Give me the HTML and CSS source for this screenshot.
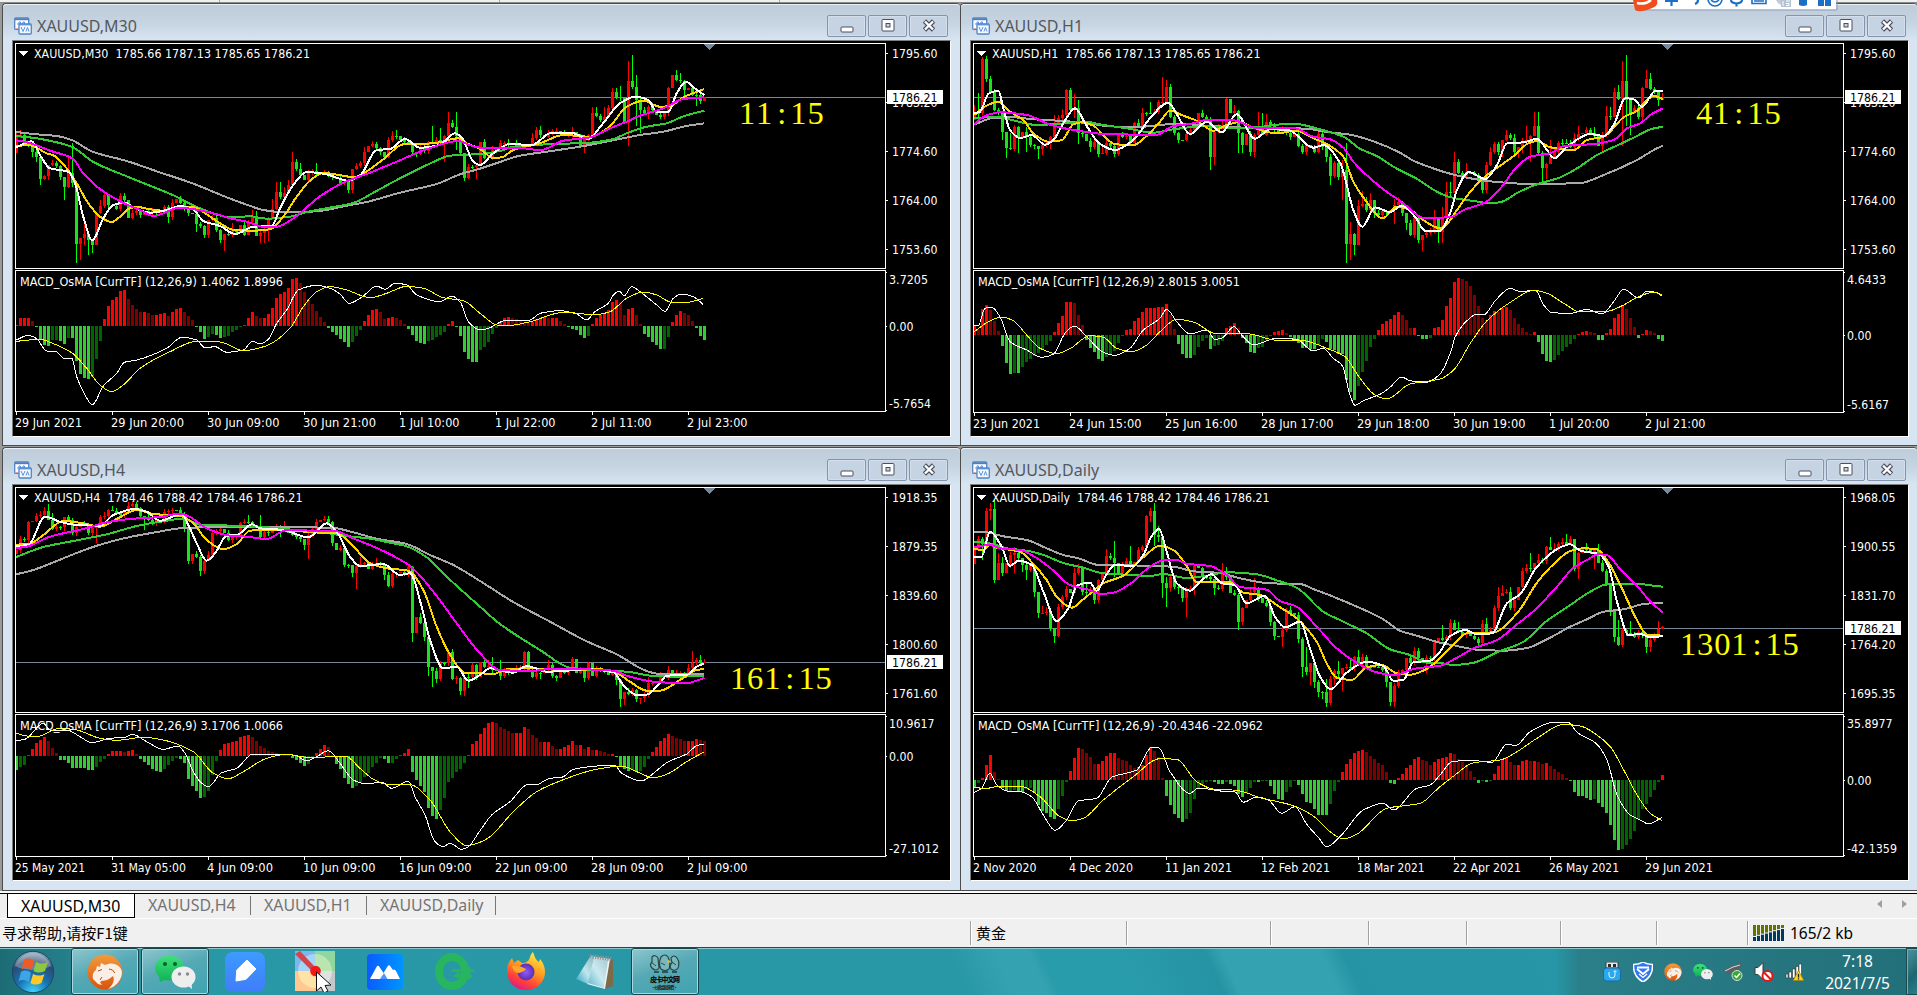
FILE: index.html
```html
<!DOCTYPE html>
<html lang="zh-CN">
<head>
<meta charset="utf-8">
<title>XAUUSD</title>
<link rel="stylesheet" href="styles.css">
</head>
<body>
<svg width="0" height="0" class="defs">
  <defs>
    <linearGradient id="gOrange" x1="0" y1="0" x2="0" y2="1"><stop offset="0" stop-color="#f49a3c"/><stop offset="1" stop-color="#d9540c"/></linearGradient>
    <linearGradient id="gGreen" x1="0" y1="0" x2="0" y2="1"><stop offset="0" stop-color="#3fe07c"/><stop offset="1" stop-color="#12b455"/></linearGradient>
    <linearGradient id="gBlue" x1="0" y1="0" x2="0" y2="1"><stop offset="0" stop-color="#3d9bff"/><stop offset="1" stop-color="#3f7dfa"/></linearGradient>
    <linearGradient id="gMeet" x1="0" y1="0" x2="1" y2="0"><stop offset="0" stop-color="#0a5cff"/><stop offset="1" stop-color="#0095ff"/></linearGradient>
    <linearGradient id="gFox" x1=".8" y1="0" x2=".3" y2="1"><stop offset="0" stop-color="#fff14a"/><stop offset=".45" stop-color="#ff9a1f"/><stop offset=".75" stop-color="#ff4338"/><stop offset="1" stop-color="#e31587"/></linearGradient>
    <radialGradient id="gFoxCore"><stop offset="0" stop-color="#9059ff"/><stop offset="1" stop-color="#5b2fb0"/></radialGradient>
    <radialGradient id="gOrb" cx=".5" cy="1" r="1"><stop offset="0" stop-color="#3fd8ff"/><stop offset=".4" stop-color="#1673b4"/><stop offset=".75" stop-color="#2c4a6e"/><stop offset="1" stop-color="#9db4c6"/></radialGradient>
    <linearGradient id="gNote" x1="0" y1="1" x2="1" y2="0"><stop offset="0" stop-color="#2b9fbc"/><stop offset=".5" stop-color="#bfe6ee"/><stop offset="1" stop-color="#8fb9c2"/></linearGradient>
    <symbol id="chartIcon" viewBox="0 0 18 18">
      <rect x=".7" y=".9" width="14" height="11.500" rx="1" fill="#fff" stroke="#4f86c4" stroke-width="1.300"/>
      <path d="M1 2.200h13.500" stroke="#4a7fc0" stroke-width="2"/><path d="M3 7h2V5h1.500v2H9V5h1.500v2" stroke="#5f8fd8" fill="none"/>
      <path d="M1 11.500h3" stroke="#f0a0a8"/>
      <rect x="5" y="7" width="12.300" height="10" rx="1" fill="#f4f8ff" stroke="#4f86c4" stroke-width="1.300"/>
      <path d="M5 7.600h12" stroke="#5b93d8" stroke-width="1.600"/><path d="M7 10l2 4.500 2-4.500M12 14.500l1.500-4 1.500 4" stroke="#5f8fd8" fill="none"/>
    </symbol>
    <symbol id="leopard" viewBox="0 0 36 36">
      <circle cx="18" cy="18" r="17.500" fill="url(#gOrange)"/>
      <path d="M6 25c-1-4 0-7 3-9l1-4 3 1 1-4 4 2c8-4 16 0 17 7 0 8-6 15-14 17 5-4 7-9 5-13-2 1-3 3-6 4-3 1-5 0-7 2l2 3-4-1-2-2z" fill="#fbeee4"/>
      <path d="M11 17l4-1.500M13 26l2-3M22 15q4 0 6 4" stroke="#a5501b" fill="none"/>
    </symbol>
    <symbol id="wechat" viewBox="0 0 41 34">
      <path d="M4 22l1 5 6-2.500z" fill="#14b857"/><ellipse cx="14.500" cy="13" rx="14.300" ry="12.500" fill="url(#gGreen)"/>
      <circle cx="10" cy="9" r="2" fill="#08642c"/><circle cx="20" cy="9" r="2" fill="#08642c"/>
      <ellipse cx="28.500" cy="22" rx="12" ry="10.500" fill="#eeeeef"/><path d="M32 30l5 4-.5-6z" fill="#eeeeef"/>
      <circle cx="24.500" cy="19" r="1.700" fill="#8b8b8d"/><circle cx="32.500" cy="19" r="1.700" fill="#8b8b8d"/>
    </symbol>
  </defs>
</svg>

<header class="strip"><i></i><i></i><i></i></header>

<main class="desk" id="desk"></main>

<nav class="tabs">
  <span class="tab active">XAUUSD,M30</span>
  <span class="tab">XAUUSD,H4</span>
  <span class="tab">XAUUSD,H1</span>
  <span class="tab daily">XAUUSD,Daily</span>
  <svg class="arrows" width="30" height="10" viewBox="0 0 30 10"><path d="M5 1v8L0 5zM25 1v8l5-4z" fill="#a0a0a0"/></svg>
</nav>

<div class="status">
  <span class="help">寻求帮助,请按F1键</span>
  <span class="cell w156">黄金</span>
  <span class="cell w144"></span>
  <span class="cell w98"></span>
  <span class="cell w98"></span>
  <span class="cell w94"></span>
  <span class="cell w96"></span>
  <span class="cell w91"></span>
  <span class="cell net"><svg width="32" height="16" viewBox="0 0 32 16" id="net"></svg>165/2 kb</span>
</div>

<footer class="taskbar">
  <div class="slot orb"><svg width="44" height="44" viewBox="0 0 44 44">
    <circle cx="22" cy="22" r="20.700" fill="url(#gOrb)" stroke="#174a68"/>
    <path d="M4 16a19 19 0 0 1 36 0c-10 5-26 5-36 0z" fill="#fff" opacity=".28"/>
    <path d="M13 10c3-2 7-2 10 1l-2.500 9.500c-3-3-7-3-10-1z" fill="#ee5b26"/><path d="M25 12c4 2 8 2 12 0l-3 9c-4 2-8 2-11.500 0z" fill="#8dc63f"/>
    <path d="M10 22c3-2 7-2 10 1l-2.500 9.500c-3-3-7-3-10-1z" fill="#3fa4e6"/><path d="M22 24c4 2 8 2 11.500 0l-3 9c-4 2-8 2-11 0z" fill="#fcc92b"/>
  </svg></div>
  <div class="slot task"><svg width="36" height="36"><use href="#leopard"/></svg></div>
  <div class="slot task"><svg width="41" height="34"><use href="#wechat"/></svg></div>
  <div class="slot"><svg width="40" height="40" viewBox="0 0 40 40"><rect width="40" height="40" rx="8" fill="url(#gBlue)"/><path d="M11 29l.8-11L22 8l9 9-10 10.300z" fill="#fff" stroke="#fff" stroke-linejoin="round"/></svg></div>
  <div class="slot"><svg width="40" height="41" viewBox="0 0 40 41"><path d="M0 0h20v20H0z" fill="#7db6e8"/><path d="M20 0h20v20H20z" fill="#8fd6a0"/><path d="M0 20h20v20H0z" fill="#ffc890"/><path d="M20 20h20v20H20z" fill="#c3c9cb"/>
    <path d="M20 20V3A17 17 0 0 0 3 20z" fill="#a5d4f4"/><path d="M20 20V3a17 17 0 0 1 17 17z" fill="#b8e5b0"/><path d="M20 20H3a17 17 0 0 0 17 17z" fill="#ffe2a8"/><path d="M20 20h17a17 17 0 0 1-17 17z" fill="#dfe3e0"/>
    <path d="M0 3l5-3 15 16-3 4z" fill="#d04550"/><circle cx="20.500" cy="20" r="5.300" fill="#f51818"/>
    <path d="M21.500 21v19l4.500-4 3 6 4-2-3-5.500 6-.5z" fill="#fff" stroke="#111" stroke-width="1"/></svg></div>
  <div class="slot"><svg width="36" height="36" viewBox="0 0 36 36"><rect width="36" height="36" rx="4" fill="url(#gMeet)"/><path d="M3 25L9.500 13q1.500-2.500 3 0l4 6 4-6.500q1.500-2.500 3 0l2.500 3.500q1.500-1.500 3 1L33 25z" fill="#fff"/><path d="M13 25l4-6 3.500 6z" fill="#4b97ff"/></svg></div>
  <div class="slot"><svg width="40" height="37" viewBox="0 0 40 37"><ellipse cx="17" cy="18.500" rx="13" ry="14.500" fill="none" stroke="#28b55f" stroke-width="8"/><path d="M17 17.500h22M19 23h18M23 16v9M28 16v9M34 14v12" stroke="#28b55f" stroke-width="2.600"/></svg></div>
  <div class="slot"><svg width="39" height="39" viewBox="0 0 39 39"><path d="M1 19c0-6 2-9 5-13l2 5 4-3 4 3c4 0 7-2 8-6 1-3 2-4 3-5 2 6 3 8 6 10l1-3c4 5 5 9 5 13 0 10-8 18-19 18S1 30 1 19z" fill="url(#gFox)"/><circle cx="20" cy="20" r="8.500" fill="url(#gFoxCore)"/><path d="M6 14c5-1 9 0 14 3-2 3-5 3-7 4-4 0-6-3-7-7z" fill="#ffa52a"/></svg></div>
  <div class="slot"><svg width="38" height="36" viewBox="0 0 38 36"><path d="M33 5l4 1v26l-8 3z" fill="#7c6a48"/><path d="M14 2l20 3-5 30-18-5z" fill="#eef5f5"/><path d="M14 3L0 25l12 5 6-26z" fill="url(#gNote)"/><path d="M18 4l14 2-4 28-16-5z" fill="url(#gNote)" opacity=".75"/><path d="M14 2l21 3" stroke="#8b9294" stroke-width="4" stroke-dasharray="1.500 1"/></svg></div>
  <div class="slot task mt"><svg width="32" height="38" viewBox="0 0 32 38">
    <path d="M3 15q-3-3 0-6V4q3-3 6 1l1 10q-3 4-7 0zM12 16q-3-5 0-12 4-4 7 0 3 6 1 12-4 3-8 0zM22 16q-2-4 1-6l-1-5q3-4 6 0 3 4 1 10-3 4-7 1z" fill="#78b8bb" stroke="#26484b" stroke-width="1.200"/><path d="M2 9l5 4M12 10l4 2M23 9l4 3" stroke="#294a4c" fill="none"/><path d="M18 7l4 1-3 3" fill="#e7b83a"/><path d="M5 19h5M13 19h6M23 19h5" stroke="#20383a" stroke-width="1.500"/>
    <text x="1" y="29" class="mt1" textLength="30">皮卡中文网</text><text x="2" y="36" class="mt2" textLength="27">·炒黄金就来看·</text>
  </svg></div>
  <div class="tray">
    <svg width="20" height="20" viewBox="0 0 20 20"><path d="M4 0h12v6H4z" fill="#e8e8e8" stroke="#30434d"/><path d="M6 2h3v3H6zM11 2h3v3h-3z" fill="#2a2a2a"/><rect x="1.500" y="6" width="17" height="13" rx="3" fill="#2ba7ee" stroke="#1d6b9c"/><path d="M7 10v3q0 3 3 3t3-3V9M11.500 10l1.500-1.500 1.500 1.500" fill="none" stroke="#eaf7ff"/></svg>
    <svg width="20" height="20" viewBox="0 0 20 20"><path d="M10 0c3 2 6 2.500 9.500 2.500C20 10 17 16 10 20 3 16 0 10 .5 2.500 4 2.500 7 2 10 0z" fill="#2f78f0" stroke="#fff" stroke-width="1.500"/><path d="M4 5.500h12M4 7l6 5 6-5" fill="none" stroke="#fff" stroke-width="2"/><path d="M6 12l4 3.500 4-3.500" fill="none" stroke="#fff" stroke-width="1.300"/></svg>
    <svg width="18" height="20" viewBox="0 -2 36 40"><use href="#leopard" width="36" height="36"/></svg>
    <svg width="20" height="18" viewBox="0 0 41 35"><use href="#wechat" width="41" height="34"/></svg>
    <svg width="20" height="18" viewBox="0 0 20 18"><path d="M0 8l8-5 10-2.500L19 3l-5 4-8 4z" fill="#5a5f63"/><path d="M2 8l8-4 7-2" stroke="#d9dddf" fill="none"/><circle cx="14" cy="12.500" r="5" fill="#3aa53a" stroke="#cfe8cf"/><path d="M11.500 12.500l2 2 3.500-4" stroke="#fff" fill="none" stroke-width="1.500"/></svg>
    <svg width="20" height="20" viewBox="0 0 20 20"><path d="M1 5.500h3l5-5v17l-5-5H1z" fill="#fff" stroke="#3a3a3a"/><circle cx="13.500" cy="14" r="5" fill="#fff" stroke="#e01818" stroke-width="2"/><path d="M10 10.500l7 7" stroke="#e01818" stroke-width="2"/></svg>
    <svg width="19" height="18" viewBox="0 0 19 18"><path d="M1 11h2v4H1zM4 9h2.500v6H4zM7.500 6H10v9H7.500zM11 3.500h2.500V15H11zM14 1h2.500v14H14z" fill="#fff" stroke="#333" stroke-width=".6"/><path d="M13.500 7.500l5.300 10H8.200z" fill="#ffd21f" stroke="#a07a00" stroke-width=".7"/><path d="M13.500 11v3.500M13.500 15.300v1.200" stroke="#222" stroke-width="1.300"/></svg>
  </div>
  <div class="clock"><span>7:18</span><span>2021/7/5</span></div>
  <div class="peek"></div>
</footer>

<div class="ime"><svg width="206" height="12" viewBox="0 0 206 12">
  <path d="M2 0h202v9.500H14z" fill="#fff"/><path d="M10 10h195V0" fill="none" stroke="#8f9db8"/>
  <path d="M1 0h24q2 6-6 8.500Q8 13 3 10z" fill="#f04f1d"/><path d="M5 3q8 2 14-3" stroke="#fff" stroke-width="2.500" fill="none"/>
  <g fill="none" stroke="#1c6fc7" stroke-width="2.200"><path d="M33 1h13M39.500 0v6"/><path d="M66 0q0 3-3 4" /><circle cx="83" cy="-1" r="7" stroke-width="1.600"/><path d="M79 0q4 4 8 0" stroke-width="1.600"/><path d="M99 0q0 3 5.500 3.500Q110 3 110 0M104.500 3v3.500"/><path d="M120 0v3.500h14V0M122 1h10" stroke-width="1.600"/></g>
  <path d="M144 0h8v6q-6-1-8-6z" fill="#c2cbd8"/><rect x="149" y="0" width="10" height="7" fill="#b5c2d2"/><path d="M151 1v5M154 1h4M154 3.500h3v2h-3" stroke="#fff" fill="none"/>
  <path d="M167 0h8v5q-4 2-8 0zM186 0h6v6h-6zM193 0h6v6h-6z" fill="#1c6fc7"/>
</svg></div>

<script src="charts.js"></script>
</body>
</html>
```
FILE: styles.css
```css
* { box-sizing: border-box; }
body {
  margin: 0;
  width: 1917px;
  height: 995px;
  overflow: hidden;
  display: flex;
  flex-direction: column;
  background: #f0f0f0;
  font-family: "Noto Sans", "Noto Sans CJK SC", sans-serif;
}
svg { display: block; flex: none; }
.defs { position: absolute; }

.strip {
  flex: none;
  height: 3px;
  background: #f0f0f0;
  border-bottom: 1px solid #8a8a8a;
  display: flex;
  gap: 279px;
  padding-left: 219px;
}
.strip i { width: 1px; background: #aaa; }

.desk {
  flex: none;
  height: 888px;
  display: grid;
  grid-template-columns: 958px 957px;
  grid-template-rows: 443px 444px;
  row-gap: 1px;
  padding-left: 2px;
  background: #9a9a9a;
}
.win {
  border: 1px solid #4c4c4c;
  border-right: 0;
  border-radius: 4px 4px 0 0;
  background: #d7e4f2;
  display: flex;
  flex-direction: column;
  align-items: flex-start;
}
.bar {
  width: 100%;
  height: 36px;
  flex: none;
  display: flex;
  align-items: center;
  padding: 6px 12px 0 11px;
  border-radius: 4px 4px 0 0;
  border-top: 1px solid #e8f0f8;
  background: linear-gradient(#bfccda, #c6d3e0 50%, #d7e4f2);
}
.win:nth-child(even) .bar { padding-right: 11px; }
.bar h2 {
  margin: 0 auto 0 5px;
  font-weight: 400;
  font-size: 16px;
  line-height: 20px;
  color: #54585c;
}
.btns { display: flex; gap: 2px; }
.btn {
  width: 39px;
  height: 22px;
  border: 1px solid #8494ad;
  border-radius: 2px;
  background: #c5d3e3;
  box-shadow: inset 0 0 0 1px #d3dfec;
  display: grid;
  place-items: center;
}
.view {
  margin-left: 9px;
  border: 1px solid #fff;
  border-top-color: #7d7d7d;
  border-left-color: #7d7d7d;
  background: #000;
}
.view text { font-family: "DejaVu Sans Condensed", "Noto Sans", sans-serif; font-size: 12.500px; fill: #fff; white-space: pre; }
.view text.tag { fill: #000; }
.view text.count { font-family: "Liberation Serif", serif; font-size: 32.500px; fill: #ff0; }

.tabs {
  flex: none;
  height: 28px;
  border-top: 2px solid #fafafa;
  border-bottom: 1px solid #fff;
  display: flex;
  align-items: flex-start;
  padding-left: 7px;
  background: linear-gradient(#000 0 1px, #efefef 1px);
}
.tab {
  height: 19px;
  margin-top: 3px;
  padding: 0 13px;
  border-right: 1px solid #777;
  font-size: 15.900px;
  line-height: 19px;
  color: #747474;
  white-space: nowrap;
  width: 116px;
}
.tab.daily { width: 129px; }
.tab.active {
  height: 25px;
  margin: 0;
  width: 128px;
  line-height: 25px;
  color: #000;
  background: #fff;
  border: 1px solid #000;
}
.arrows { margin: 6px 10px 0 auto; }

.status {
  flex: none;
  height: 28px;
  display: flex;
  align-items: center;
  background: #f0f0f0;
  font-size: 15.500px;
  line-height: 24px;
  color: #000;
  white-space: nowrap;
}
.help { width: 970px; padding-left: 2px; font-family: "Noto Sans CJK SC", sans-serif; font-size: 15px; }
.cell { height: 24px; border-left: 1px solid #a0a0a0; box-shadow: inset 1px 0 #fff; padding-left: 5px; font-family: "Noto Sans CJK SC", sans-serif; font-size: 15px; }
.w156 { width: 156px; } .w144 { width: 144px; } .w98 { width: 98px; }
.w94 { width: 94px; } .w96 { width: 96px; } .w91 { width: 91px; }
.net { flex: 1; display: flex; align-items: center; gap: 5px; font-family: "Noto Sans", sans-serif; font-size: 15.500px; }

.taskbar {
  flex: none;
  height: 48px;
  border-top: 1px solid #1e4b50;
  box-shadow: inset 0 1px #8fc8cf;
  display: flex;
  background:
    linear-gradient(90deg, #1d6c75 0, #25808c 70px, transparent 150px, transparent 1555px, #2a7f89 1580px, #226f79 1917px),
    linear-gradient(65deg, #2998a6 0 880px, #35a2b1 920px 950px, #299cab 960px 1030px, #2593a3 1110px, #35a2b1 1125px 1215px, #2594a4 1235px, #2a9aaa 100%);
}
.slot {
  width: 68px;
  margin-right: 2px;
  display: grid;
  place-items: center;
  border: 1px solid transparent;
}
.slot.orb { width: 67px; margin-right: 4px; padding-right: 2px; }
.task {
  border: 1px solid #17444b;
  border-radius: 3px;
  box-shadow: inset 0 0 0 1px #a9d8de;
  background: linear-gradient(160deg, #8fc6cd, #55a9b5 45%, #3fa3b1);
}
.mt1 { font: 900 7px "Noto Sans CJK SC", sans-serif; fill: #111; }
.mt2 { font: 700 4.500px "Noto Sans CJK SC", sans-serif; fill: #222; }
.tray { margin-left: auto; display: flex; align-items: center; gap: 10.800px; padding-top: 1px; }
.clock {
  width: 95px;
  margin-left: 6px;
  display: flex;
  flex-direction: column;
  align-items: center;
  padding-top: 2px;
  color: #fff;
  font-size: 15.500px;
  line-height: 22px;
}
.peek { width: 11px; margin-left: 1px; border: 1px solid #1a4a50; border-right: 0; box-shadow: inset 1px 1px #6fb0b8; background: linear-gradient(135deg, #4c949d, #1d6670 60%, #2a808b); }

.ime { position: absolute; left: 1632px; top: 0; }
```
FILE: charts.js
```js
// Geometry below is stored in thirds of a pixel; moving averages and MACD lines
// are [left half | right half], the right half being shifted by `shift`.
const BAR = 4;

const panels = [
  {
    title: 'XAUUSD,M30', label: 'XAUUSD,M30  1785.66 1787.13 1785.65 1786.21', labelW: 276,
    osc: 'MACD_OsMA [CurrTF] (12,26,9) 1.4062 1.8996', oscW: 263,
    left: 13, top: 41, ox: 0, oy: 0, shift: 1440, x0: 16, right: 885, oscBottom: 411, now: 97, nowTop: 90,
    prices: ['1795.60', '1783.20', '1774.60', '1764.00', '1753.60'],
    scale: [['3.7205', 284, 39], ['0.00', 331, 24.5], ['-5.7654', 408, 42]], zero: 978,
    times: [['29 Jun 2021', 67], ['29 Jun 20:00', 73], ['30 Jun 09:00', 72.5], ['30 Jun 21:00', 73], ['1 Jul 10:00', 60.5], ['1 Jul 22:00', 60.5], ['2 Jul 11:00', 60.5], ['2 Jul 23:00', 60.5]],
    count: ['11:15', 739, 124], open: 458,
    bars: '412/395 405/390 425 432 455//470 470//485 538//555 527//540 495//540 490 497 530 560//600 520/470 550/430/560 732//788 714//780 702/665/735 720//765 735//758 640 617/600 585/575 615 618 628 587/580 600/580 655 640 632 645 632 640 630 638 632 622/615 650//670 610/598 597 610 628 640 643 672//695 678 705 660//715 655 690 720 702//752 705 690/668 695 675 705 665//705 648/630 708/632 698//728 690//728 655//722 628/597 577/547 592/547 580/560 555/540 485/457 507/478 525/490 540 520 512 517/490 520 518 524 530 538 548 545 570 508//578 498/488 488 455/440 437 433 445/425 455 470 420/412 408/392 408/390 420 425 430 455 462//472 440 452 425 430/378 420 425/385 408//485 370/335 380 408/335/450 458 535//542 500 500 495//537 425 475 470 450/437 445 430 428 432/418 430 435 437 438 435 415/400 390/382 405/378 410 398 393 392/385 398 405 402 395/380 412 437 415//458 405 340/322 348/320 360 352/322 325/315 275/265 290/265 295/257 368/290 243/183/437 262/165 300/225/378 330/290/400 340 320//357 330 345 352//357 340 263 225 240/210 243/220 270//290 265 285 285//317 302 290',
    hist: '975 954 954 954 964 980 1017 1035 1038 1020 1019 1023 1032 1014 1014 1083 1122 1134 1137 1130 1077 1023 957 918 900 891 873 870 897 915 927 936 936 939 945 945 942 939 948 936 927 924 936 948 960 980 996 1017 1010 1002 1005 1013 1010 1008 996 990 981 975 954 936 948 954 954 942 924 894 882 876 864 837 834 849 876 897 912 933 951 966 984 996 1005 1017 1026 1041 1025 1008 990 963 945 930 927 936 957 954 951 954 960 972 987 1005 1023 1029 1032 1023 1020 1012 1005 996 972 963 980 1008 1056 1077 1086 1086 1050 1041 1026 1002 984 966 954 951 954 957 960 966 969 966 957 954 951 954 954 954 963 972 981 986 990 1005 1014 1008 972 954 945 942 930 906 900 906 945 927 924 945 972 1002 1011 1026 1035 1047 1046 1011 966 945 933 939 945 963 984 1008 1020',
    ma: [
      ['#a9a9a9', '49,396 110,403 170,408 217,421 277,455 380,483 470,514 580,551 680,592 740,614 790,630 850,637 950,634 1040,617 1100,606 1200,578 1310,552 1380,523 1440,506|0,506 60,486 120,467 200,455 300,440 400,421 480,405 550,395 620,378 673,370'],
      ['#32cd32', '49,408 110,415 170,427 217,441 280,486 380,529 450,557 520,586 600,625 690,652 750,649 800,656 870,650 920,636 1000,621 1060,609 1120,578 1200,535 1300,486 1350,467 1440,462|0,460 60,453 100,440 200,433 330,428 400,417 440,400 500,380 560,370 610,349 673,332'],
      ['#ffd700', '49,437 90,436 140,460 160,466 200,505 230,550 265,610 300,650 335,666 360,650 385,627 410,620 440,626 490,632 530,625 580,622 620,643 660,670 700,689 760,692 810,688 850,650 890,590 930,542 970,519 1030,527 1060,532 1090,520 1150,478 1210,433 1300,430 1375,415 1400,430 1440,447|0,447 40,474 65,472 100,450 180,430 250,405 330,410 385,383 440,320 490,302 540,320 570,318 610,292 673,267'],
      ['#ffffff', '49,442 95,424 120,465 150,505 205,515 225,550 250,650 277,721 310,655 340,615 375,608 400,622 450,638 500,630 540,618 580,628 610,663 660,678 705,702 760,680 815,678 840,625 880,555 920,516 975,522 1045,542 1080,527 1130,450 1170,447 1215,417 1260,443 1320,435 1365,400 1385,412 1420,485 1440,495|0,492 40,460 90,432 155,435 215,398 280,400 325,417 365,375 420,310 465,290 505,300 530,335 565,335 590,280 618,245 640,262 673,285'],
      ['#ff00ff', '49,421 85,428 150,452 217,475 250,520 300,567 360,604 420,630 460,648 540,623 640,640 690,655 740,665 790,680 830,680 880,655 960,589 1030,548 1110,518 1190,485 1280,448 1375,423 1410,436 1440,443|0,443 130,445 180,451 250,422 330,412 390,385 440,365 480,347 550,325 610,297 673,292']
    ],
    lines: [
      ['#ffffff', '49,1020 85,1006 110,1016 140,1053 165,1053 193,1075 215,1074 230,1130 250,1175 277,1214 310,1158 350,1120 373,1087 410,1080 500,1045 545,1012 590,1020 615,1043 645,1040 680,1057 730,1050 757,1024 780,1032 805,1018 830,970 860,930 895,870 950,856 990,865 1020,882 1047,910 1085,892 1130,858 1155,868 1185,850 1220,854 1250,885 1320,905 1355,888 1380,905 1405,965 1440,990|0,978 25,985 75,962 150,960 180,940 240,932 290,942 320,960 345,935 385,910 400,885 418,873 432,888 455,860 480,875 530,915 555,934 580,895 605,882 640,890 670,914'],
      ['#ffff00', '49,1024 120,1018 150,1027 215,1058 260,1105 300,1155 335,1175 370,1155 420,1105 510,1055 590,1024 660,1026 730,1052 800,1037 870,985 910,920 950,875 990,860 1040,870 1110,893 1160,880 1220,859 1270,865 1330,893 1390,902 1440,940|0,938 50,975 75,978 150,965 250,937 345,944 390,935 440,895 490,876 530,885 575,907 620,907 670,895']
    ]
  },
  {
    title: 'XAUUSD,H1', label: 'XAUUSD,H1  1785.66 1787.13 1785.65 1786.21', labelW: 268.5,
    osc: 'MACD_OsMA [CurrTF] (12,26,9) 2.8015 3.0051', oscW: 262,
    left: 971, top: 41, ox: 960, oy: 0, shift: 1431, x0: 974, right: 1843, oscBottom: 412, now: 97, nowTop: 90,
    prices: ['1795.60', '1783.20', '1774.60', '1764.00', '1753.60'],
    scale: [['4.6433', 284, 39], ['0.00', 340, 24.5], ['-5.6167', 409, 42]], zero: 1005,
    times: [['23 Jun 2021', 67], ['24 Jun 15:00', 72.5], ['25 Jun 16:00', 72.5], ['28 Jun 17:00', 72.5], ['29 Jun 18:00', 72.5], ['30 Jun 19:00', 72.5], ['1 Jul 20:00', 60.5], ['2 Jul 21:00', 60.5]],
    count: ['41:15', 1696, 124], open: 360,
    bars: '340/315 340/280/350 178//345 237/168 275/228 330 340 395//420 443//473 448/400 380 410//458 395 410/380/455 435 438 448//478 435//465 430 410//448 370/345 353 345/328 270 330/265 325/282/355 400/300/433 402 422 440//455 425 462 458/440 430//465 438 462 405//467 412 408 430 370/365 382/357 340/325 340 340/305 335 307 305/230 262/240 350 398 420//430 420 403//422 390 380 340 350 360 470/350/510 395//495 380 375/357 297 340 332/315 400/330/460 435//458 402 455//467 405//470 385/335 405/340 365/342 378 390/370 395 388 400 410 403 438 455 435 445 457 402//460 440/395 470//485 527//555 490 530 510/480/600 732/430/788 702/665/780 735//765 618/600 612/573 630/590 600/580 640//655 645 632 635 630 615/597/672 605/592 640 670//690 705 655//715 720 705//752 700//715 690 650/630 697//728 652/620/728 577/547 580/547 485/457 520/478 527 515/490 522 525 540 570 495/487/578 455/440 433 455/425 420//470 405/390 415/400 455/403/465 440//475 422//460 420/378 408//485 378/337 458/337 503//545 493//537 470/420 455 430 430/418 430/418 440 415/400 402/378 398 390 400 408/380 437 405//455 348/318 350/320 275/265 297/255 243/183/437 300/165/378 340//405 325 350//357 263 237/210 268/220 275 300//317 290/280',
    hist: '975 990 927 915 930 963 993 1038 1089 1122 1118 1118 1101 1086 1077 1068 1060 1050 1035 1022 996 969 948 906 906 909 945 975 1020 1044 1056 1077 1083 1070 1063 1052 1028 1007 990 987 963 954 936 924 924 924 921 921 912 945 987 1032 1062 1074 1074 1065 1041 1023 1014 1047 1038 1035 1022 984 978 969 984 1014 1029 1056 1059 1043 1041 1020 1008 996 993 990 999 1011 1017 1029 1044 1044 1047 1047 1035 1017 1026 1047 1050 1062 1062 1140 1176 1200 1158 1116 1083 1041 1017 990 972 963 957 945 936 945 960 984 984 1008 1017 1017 1013 984 981 960 918 894 846 834 837 843 858 885 918 954 960 945 933 936 924 921 930 954 972 984 996 1002 996 1026 1062 1083 1086 1080 1065 1053 1041 1032 1017 1002 996 993 996 999 1020 1020 999 987 954 942 915 927 954 981 1014 1002 990 993 999 1017 1022',
    ma: [
      ['#a9a9a9', '43,374 100,354 160,352 220,358 310,363 370,368 440,378 520,382 600,375 650,371 740,377 860,383 960,384 1040,386 1100,396 1170,404 1240,424 1320,458 1360,482 1440,512|0,508 50,524 100,535 170,545 260,551 350,551 430,549 500,525 600,480 650,450 677,437'],
      ['#32cd32', '43,355 110,350 160,361 230,375 300,371 380,366 430,375 500,385 580,398 640,388 730,379 820,384 890,382 950,374 1000,371 1080,388 1150,410 1200,446 1250,468 1300,500 1370,536 1440,580|0,574 50,594 110,603 160,610 195,605 240,579 300,553 370,532 420,505 480,465 550,432 600,408 640,388 677,380'],
      ['#ffd700', '43,345 80,317 115,305 150,335 190,360 220,400 265,425 305,421 340,373 365,367 400,377 430,405 465,433 520,435 560,408 600,365 630,332 670,347 710,362 760,392 800,375 840,366 880,383 950,400 1010,392 1060,415 1100,432 1150,470 1180,545 1210,592 1268,655 1310,620 1350,630 1400,667 1440,685|0,684 30,672 60,630 100,575 150,525 200,490 240,460 270,432 300,423 340,442 410,450 450,420 500,410 560,352 600,332 630,300 650,288 677,297'],
      ['#ffffff', '43,340 60,335 85,282 115,272 130,325 150,390 180,414 215,405 255,434 280,420 310,370 345,325 380,378 420,432 465,450 520,420 570,355 625,308 650,342 690,402 740,365 785,397 830,343 885,416 930,388 985,390 1060,443 1090,435 1140,488 1150,515 1180,630 1207,680 1245,622 1290,636 1325,617 1365,650 1395,692 1440,692|0,692 40,638 60,570 95,516 145,537 180,495 210,430 260,427 300,416 330,450 352,475 390,440 460,402 500,408 530,375 565,295 590,298 615,320 655,273 677,272'],
      ['#ff00ff', '43,374 75,348 120,337 200,345 270,374 340,390 450,403 590,404 640,378 690,372 740,360 820,361 890,384 1000,384 1060,410 1110,418 1150,443 1180,485 1260,560 1330,610 1390,653 1440,653|0,655 45,650 80,630 145,607 190,565 240,500 280,470 340,460 380,438 470,432 530,420 570,385 610,370 640,345 677,325']
    ],
    lines: [
      ['#ffffff', '43,975 55,976 75,925 95,922 120,950 150,1025 200,1050 245,1072 280,1063 315,1000 343,978 380,1010 430,1057 465,1066 510,1045 550,990 600,955 620,928 650,965 690,1002 740,990 765,1018 785,1015 822,980 845,1005 880,1034 950,1015 1010,1018 1060,1053 1090,1045 1120,1075 1147,1097 1170,1185 1185,1216 1210,1202 1260,1183 1290,1162 1325,1131 1350,1142 1400,1147 1440,1122|0,1130 15,1115 40,1060 55,1010 90,962 120,942 140,945 175,902 220,865 250,875 295,870 320,915 345,938 400,940 450,928 495,942 530,905 560,868 605,894 630,873 660,878 675,888'],
      ['#ffff00', '43,995 85,965 125,951 160,962 200,1005 240,1045 290,1061 330,1046 390,1007 430,1012 470,1045 515,1055 560,1035 600,995 650,958 700,966 770,1002 860,1001 950,1021 1030,1022 1100,1045 1155,1070 1200,1135 1245,1185 1280,1197 1350,1152 1440,1137|0,1138 15,1138 50,1110 100,1030 150,962 220,907 290,871 330,880 380,910 430,936 510,934 560,915 600,892 650,877 675,884']
    ]
  },
  {
    title: 'XAUUSD,H4', label: 'XAUUSD,H4  1784.46 1788.42 1784.46 1786.21', labelW: 268.5,
    osc: 'MACD_OsMA [CurrTF] (12,26,9) 3.1706 1.0066', oscW: 263,
    left: 13, top: 485, ox: 0, oy: 440, shift: 1440, x0: 16, right: 885, oscBottom: 856, now: 662, nowTop: 655,
    prices: ['1918.35', '1879.35', '1839.60', '1800.60', '1761.60'],
    scale: [['10.9617', 728, 45.5], ['0.00', 761, 24.5], ['-27.1012', 853, 50]], zero: 948,
    times: [['25 May 2021', 70], ['31 May 05:00', 75], ['4 Jun 09:00', 66], ['10 Jun 09:00', 72.5], ['16 Jun 09:00', 72.5], ['22 Jun 09:00', 72.5], ['28 Jun 09:00', 72.5], ['2 Jul 09:00', 60.5]],
    count: ['161:15', 730, 689], open: 343,
    bars: '330 298/288/338 300 245 243 228 225/212 212/200 240/192 268/220 260 262 232//272 240/225 278 262 250 255/243 278 265//290 262//308 232/225 228/215 210 213/198 218 225 215 198/187 193 205/185 228 232//270 240 248 240 245 215/207 213 210/203 210 222 265//275 362//372 342//372 350 392//408 362 345/332 278 272 268 280 300 292//310 285 250/247 245 247/225 255 260 290/225/300 275 280 265 262 268//290 262/243 280 285 290 298 315//330 285//357 268 245/238 240 237 245/228 308 330 325 375 375 400//410 378//448 372/352 368 388 375 368/355 372 405//420 437 402 400 395 405 382 578//605 532 548/520 592//603 682//707 693//740 717/683/730 668 668 635/628/678 717 715//733 753//765 712//768 712//743 675/668 710 665 680 678/660 690/652 692 708/660/720 690 695 692 685 680 635 690/633 710 700 700//718 690 675/660 708/670 713 695 698 685 657/652 698 690 715//725 668//720 708 688 690 690 705 700 720//735 778//800 755//795 763/743 750 778 775//792 765//785 730/712 728 722 705/695 710 690/678 708 700 698 700 683/672 670/633 660 667/645 666/657',
    hist: '990 981 975 945 927 909 900 891 903 924 939 960 960 969 984 984 984 984 990 990 981 966 957 942 933 933 933 936 933 930 942 957 966 975 987 993 996 987 975 963 954 957 969 1017 1038 1053 1074 1071 1053 1005 963 930 912 909 906 903 891 888 885 891 903 918 924 933 936 940 942 944 946 954 960 969 978 972 958 939 927 915 921 945 972 987 1014 1032 1044 1038 1029 1011 999 981 969 954 957 969 968 957 945 939 927 996 1020 1038 1056 1104 1128 1137 1110 1074 1026 1014 996 987 969 945 912 903 882 864 849 846 849 861 867 873 879 879 879 861 867 885 894 906 906 906 918 927 927 921 915 903 915 915 927 921 930 930 933 936 942 942 951 978 987 993 990 993 992 981 958 936 921 903 894 882 888 894 897 903 903 903 897 900 903',
    ma: [
      ['#a9a9a9', '49,403 100,390 170,363 240,335 300,314 380,293 460,278 550,264 640,262 740,262 830,260 920,262 1000,264 1060,277 1130,296 1220,312 1290,345 1360,375 1440,423|0,423 100,486 210,545 320,604 410,643 500,693 540,702 600,702 673,702'],
      ['#32cd32', '49,351 130,321 230,301 320,283 410,258 500,242 550,236 600,254 700,257 800,262 900,272 970,278 1040,288 1110,296 1170,308 1220,319 1280,352 1340,410 1440,500|0,500 60,552 180,630 270,683 340,690 440,695 520,708 590,710 673,708'],
      ['#ffd700', '49,314 90,311 130,285 190,243 250,250 300,260 350,237 410,210 460,222 540,228 580,250 620,300 670,328 710,312 750,272 800,270 870,272 960,278 1010,280 1050,308 1110,370 1160,385 1225,392 1270,450 1310,560 1345,635 1395,698 1440,700|0,703 40,702 80,688 150,685 250,690 360,688 410,700 450,725 500,752 540,752 600,720 650,690 673,687'],
      ['#ffffff', '49,318 85,315 135,230 185,247 240,256 300,257 340,225 405,207 440,215 480,242 545,222 565,255 590,310 620,362 645,340 680,287 710,285 757,253 780,265 850,270 925,292 980,250 1010,275 1050,350 1080,378 1150,372 1200,405 1230,400 1265,500 1290,600 1330,685 1370,680 1405,722 1440,705|0,705 30,685 100,698 140,678 200,695 260,692 320,688 400,697 430,735 470,765 500,764 540,728 560,707 620,705 650,680 673,670'],
      ['#ff00ff', '49,324 80,320 150,290 250,267 320,247 400,236 480,231 540,221 570,231 620,265 690,287 740,290 800,297 860,270 950,272 1000,272 1060,295 1150,333 1230,378 1300,455 1370,550 1440,640|0,640 60,690 150,693 220,686 350,689 400,692 440,707 520,725 620,730 650,722 673,713']
    ],
    lines: [
      ['#ffffff', '49,902 75,898 130,850 150,870 200,870 240,890 275,908 330,895 375,892 397,883 440,905 490,928 535,918 555,940 580,995 605,1030 625,1040 665,998 710,985 757,943 840,943 885,946 920,962 950,950 985,932 1020,970 1060,1020 1100,1032 1145,1026 1175,1045 1225,1024 1245,1070 1275,1125 1305,1205 1330,1220 1350,1210 1385,1228 1405,1220 1440,1172|0,1172 35,1125 90,1085 145,1033 165,1035 210,1015 245,1012 280,988 350,978 405,976 425,1000 485,1023 510,1008 565,965 620,942 650,917 672,912'],
      ['#ffff00', '49,880 80,888 110,890 180,865 230,870 300,895 350,901 430,892 480,898 580,935 640,1000 685,1016 730,995 800,955 860,943 930,953 1035,948 1080,985 1120,1018 1160,1033 1230,1034 1290,1080 1350,1175 1400,1217 1440,1207|0,1208 30,1190 100,1115 170,1055 240,1023 340,990 425,978 470,995 520,1013 560,1003 620,965 672,936']
    ]
  },
  {
    title: 'XAUUSD,Daily', label: 'XAUUSD,Daily  1784.46 1788.42 1784.46 1786.21', labelW: 277.5,
    osc: 'MACD_OsMA [CurrTF] (12,26,9) -20.4346 -22.0962', oscW: 285,
    left: 971, top: 485, ox: 960, oy: 440, shift: 1431, x0: 974, right: 1843, oscBottom: 856, now: 628, nowTop: 621,
    prices: ['1968.05', '1900.55', '1831.70', '1764.20', '1695.35'],
    scale: [['35.8977', 728, 45.5], ['0.00', 785, 24.5], ['-42.1359', 853, 50]], zero: 1020,
    times: [['2 Nov 2020', 63.5], ['4 Dec 2020', 64], ['11 Jan 2021', 67], ['12 Feb 2021', 69], ['18 Mar 2021', 67.5], ['22 Apr 2021', 68], ['26 May 2021', 70], ['29 Jun 2021', 68]],
    count: ['1301:15', 1680, 655], open: 372,
    bars: '325 297 312//360 213/205 207/190/240 420/180/428 370/340/405 398/350 370 345//385 340/322/398 355 375//395 390//420 375 455//470 520//535 518/498 515/500 565 588//610 500 470 447/438 460 400/385 385/372 455 460/430/470 450 480//493 420 400 348/327 355/340 370/303/410 400 375 362/353 375/318 365 330 320/315 228 213/205/245 285/188/318 290/258/305 430//475 443/412/500 412//457 440 445//462 475//485 450//530 445 378//465 385 410/380 410 418 445//465 447 400/370 410/380 458 465 547//570 505 480 455/440/485 445/415 475 490 497 545//557 588//600 590 570//620 510 520/498 525 598//610 680//712 697/620 670//735 727//745 757//772 757//778 790/718/800 718//795 692//735 703/663 685//752 682 685/655 652 672/630 652//690 680 685 680 680 690 725//740 785//797 738//800 695 690 655 668 632/622 655/625 670 655//700 655 610 595 600/555 590 548/538 570/540 575/545 585 580 588 598 610 552/540 575/535 570 505/495 467/440 458/435 455 503/440 480//512 440 392 383/372 387/340 370 360/342 362 322/317 330/290 328/310 312 305/295 312/282 298 388/297 340//417 322 330/310 335 330//387 370/313 393 433 510//527 592//605 615/540 570//622 578 585/543 590 577 585 622//640 600//635 585 567/543 562/557',
    hist: '1044 1029 1014 975 945 996 1017 1044 1054 1052 1050 1056 1056 1047 1044 1060 1095 1113 1119 1131 1137 1107 1068 1026 993 954 924 927 939 951 972 972 963 948 939 939 954 960 963 975 984 981 975 945 921 933 951 1014 1068 1095 1122 1134 1146 1137 1119 1077 1047 1032 1026 1023 1026 1032 1032 1026 1032 1038 1062 1071 1059 1044 1026 1026 1024 1023 1038 1062 1077 1080 1056 1041 1023 1035 1062 1086 1089 1107 1125 1125 1125 1092 1053 1026 996 972 957 939 933 930 936 948 957 969 975 996 1029 1032 1014 1002 984 975 957 951 960 963 975 966 957 954 951 939 942 957 966 975 993 1011 1029 1023 1026 1024 1002 978 960 951 966 975 975 963 960 963 963 966 972 969 978 987 996 1002 1014 1023 1056 1068 1068 1074 1080 1077 1089 1101 1119 1155 1200 1230 1227 1215 1197 1173 1137 1107 1092 1071 1050 1026 1005',
    ma: [
      ['#a9a9a9', '43,275 80,277 130,289 200,300 260,325 310,345 360,356 410,374 500,376 600,378 650,382 700,394 780,399 840,415 930,430 1020,432 1060,447 1120,470 1200,504 1270,538 1320,572 1370,587 1440,608|0,605 50,616 120,629 200,632 270,624 330,598 400,560 450,538 500,515 560,508 620,492 677,488'],
      ['#32cd32', '43,305 100,312 140,325 200,332 250,345 310,369 370,383 430,400 520,405 570,408 610,402 680,414 740,407 800,397 890,403 950,421 1010,443 1090,515 1150,545 1220,580 1290,628 1350,645 1400,668 1440,669|0,669 50,675 110,668 180,637 260,605 320,550 400,495 460,455 510,433 600,431 640,436 677,440'],
      ['#ffd700', '43,327 70,330 90,313 110,323 180,335 220,372 260,420 290,470 335,503 370,478 430,430 490,407 550,352 600,317 640,330 680,378 710,427 810,427 850,458 900,465 960,502 1010,535 1070,605 1100,670 1130,713 1175,720 1220,682 1265,675 1310,700 1350,704 1400,687 1440,655|0,658 50,612 90,580 170,577 240,520 300,428 350,372 400,333 440,325 480,328 510,360 550,435 600,540 630,584 677,587'],
      ['#ffffff', '43,352 65,350 90,275 125,320 150,378 175,362 215,375 250,455 290,543 325,505 350,437 390,428 410,452 440,402 465,375 520,378 550,345 575,288 597,267 620,335 650,430 690,452 725,420 755,403 785,430 825,435 860,490 915,467 945,530 975,562 1020,545 1050,625 1080,710 1112,748 1160,698 1220,665 1270,678 1300,722 1330,720 1360,667 1410,662 1440,635|0,655 40,588 85,570 120,583 165,580 210,490 250,462 300,380 370,322 400,313 430,332 485,342 515,380 540,485 575,585 610,582 640,592 677,588'],
      ['#ff00ff', '43,321 90,315 120,325 180,330 220,348 270,383 330,435 390,450 420,462 460,458 510,432 570,380 610,361 650,360 680,371 750,378 800,405 840,441 920,449 960,483 1010,500 1070,560 1130,625 1180,662 1250,697 1300,705 1370,685 1440,677|0,680 60,653 110,625 180,600 240,553 290,513 360,440 410,383 450,360 485,343 510,345 550,388 600,437 640,485 677,517']
    ],
    lines: [
      ['#ffffff', '43,1057 65,1045 90,1000 110,1035 145,1054 180,1055 215,1070 250,1125 285,1171 320,1140 355,1083 410,1075 455,1012 530,990 575,922 597,924 630,995 690,1060 715,1044 790,1054 825,1056 850,1087 890,1071 925,1080 965,1120 1005,1100 1040,1153 1075,1192 1100,1220 1140,1190 1210,1110 1270,1090 1300,1110 1370,1045 1410,1035 1440,1005|0,1013 45,965 100,961 165,967 210,912 235,917 280,875 350,847 395,848 420,877 475,908 510,960 540,1065 580,1125 610,1140 635,1152 675,1132'],
      ['#ffff00', '43,1043 80,1045 120,1038 180,1038 240,1070 300,1130 335,1142 370,1135 430,1080 520,1010 600,956 650,958 710,1025 760,1047 830,1051 900,1073 1000,1097 1060,1128 1110,1175 1150,1197 1190,1183 1280,1105 1380,1090 1440,1040|0,1046 50,1008 110,968 190,960 240,935 300,895 380,853 430,858 480,885 520,920 560,990 600,1065 640,1120 675,1142']
    ]
  }
];

function points(str, p) {
  const [a, b] = str.split('|').map(s => s.split(' ').map(q => q.split(',').map(Number)));
  const edge = a[a.length - 1][0];
  const all = a.concat(b.map(([x, y]) => [x + p.shift, y]).filter(([x]) => x > edge + 6));
  return all.map(([x, y]) => [p.ox + x / 3, p.oy + y / 3]);
}

// Monotone cubic through the key points.
function smooth(pts) {
  const n = pts.length, m = [], d = [];
  for (let i = 0; i < n - 1; i++) d[i] = (pts[i + 1][1] - pts[i][1]) / (pts[i + 1][0] - pts[i][0]);
  m[0] = d[0]; m[n - 1] = d[n - 2];
  for (let i = 1; i < n - 1; i++) m[i] = d[i - 1] * d[i] <= 0 ? 0 : 2 * d[i - 1] * d[i] / (d[i - 1] + d[i]);
  let out = `M${pts[0][0].toFixed(1)} ${pts[0][1].toFixed(1)}`;
  for (let i = 0; i < n - 1; i++) {
    const h = (pts[i + 1][0] - pts[i][0]) / 3;
    out += `C${(pts[i][0] + h).toFixed(1)} ${(pts[i][1] + m[i] * h).toFixed(1)} ${(pts[i + 1][0] - h).toFixed(1)} ${(pts[i + 1][1] - m[i + 1] * h).toFixed(1)} ${pts[i + 1][0].toFixed(1)} ${pts[i + 1][1].toFixed(1)}`;
  }
  return out;
}

function text(x, y, s, w, cls) {
  return `<text x="${x}" y="${y}"${w ? ` textLength="${w}" lengthAdjust="spacingAndGlyphs"` : ''}${cls ? ` class="${cls}"` : ''}>${s}</text>`;
}
function rect(x, y, w, h, fill) {
  return `<rect x="${x}" y="${y}" width="${w}" height="${h}" fill="${fill}"/>`;
}

function draw(p) {
  const l = p.left + 2, t = p.top + 2, split = t + 225;
  let s = '';
  s += rect(l, p.now, p.right - l, 1, '#778899');

  let open = p.open;
  p.bars.split(' ').forEach((b, i) => {
    const [c, hi, lo] = b.split('/').map(v => v ? +v : 0);
    const up = c < open, x = p.x0 + i * BAR;
    const topY = Math.min(open, c), botY = Math.max(open, c);
    const h = hi || topY - (i * 7 % 4) * 3, w = lo || botY + (i * 5 % 4) * 3;
    const y = v => Math.round(p.oy + v / 3);
    s += rect(x, y(h), 1, Math.max(1, y(w) - y(h)), up ? '#f00' : '#0f0');
    s += rect(x - 1, y(topY), 3, Math.max(1, y(botY) - y(topY)), up ? '#f00' : '#1ee01e');
    open = c;
  });

  let prev = 0;
  const zero = p.oy + p.zero / 3;
  p.hist.split(' ').forEach((v, i) => {
    const k = p.zero - v, y = Math.round(p.oy + v / 3), x = p.x0 - 1 + i * BAR;
    const color = k > 0 ? (k >= prev ? '#f00' : '#800000') : (k <= prev ? '#32cd32' : '#006400');
    s += rect(x, Math.min(y, zero), 3, Math.max(1, Math.abs(y - zero)), color);
    prev = k;
  });

  for (const [c, d] of p.ma) s += `<path d="${smooth(points(d, p))}" fill="none" stroke="${c}" stroke-width="2"/>`;
  for (const [c, d] of p.lines) s += `<path d="${smooth(points(d, p))}" fill="none" stroke="${c}" stroke-width="1"/>`;

  // frames and axis ticks
  s += rect(p.left, t, 2, p.oscBottom - t, '#000');
  s += `<path d="M${l + .5} ${t + .5}H${p.right + .5}V${split + .5}H${l + .5}zM${l + .5} ${split + 2.5}H${p.right + .5}V${p.oscBottom + .5}H${l + .5}z" fill="none" stroke="#fff"/>`;
  s += `<path d="M${p.right - 181} ${t + 1}h11l-5.5 6z" fill="#778899"/>`;
  p.prices.forEach((v, i) => {
    s += rect(p.right + 1, t + 10 + i * 49, 2, 1, '#fff') + text(p.right + 7, t + 15 + i * 49, v, 45.5);
  });
  s += rect(p.right + 2, p.nowTop, 56, 14, '#fff') + text(p.right + 7, p.nowTop + 12, '1786.21', 45.5, 'tag');
  p.scale.forEach(([v, y, w], i) => {
    const ty = i === 1 ? Math.round(zero) : i ? p.oscBottom - 1 : split + 4;
    s += rect(p.right + 1, ty, 1, 1, '#fff') + text(p.right + 4, y, v, w);
  });
  p.times.forEach(([v, w], i) => {
    s += rect(l + 1 + i * 96, p.oscBottom + 1, 1, 3, '#fff') + text(l + i * 96, p.oscBottom + 16, v, w);
  });
  s += `<path d="M${l + 4} ${t + 8}h9l-4.500 5z" fill="#fff"/>`;
  s += text(l + 19, t + 15, p.label, p.labelW) + text(l + 5, split + 18, p.osc, p.oscW);
  const [c, cx, cy] = p.count;
  const xs = [...c].map((ch, i) => cx + i * 17.1 + (ch === ':' ? 4 : 0)).join(' ');
  s += `<text class="count" x="${xs}" y="${cy}">${c}</text>`;
  return `<svg width="937" height="395" viewBox="${p.left} ${p.top} 937 395" shape-rendering="crispEdges">${s}</svg>`;
}

const glyphs = [
  '<rect x="1" y="9" width="12" height="5" rx="1" fill="#fff" stroke="#4a4f60"/>',
  '<rect x="1" y="1.500" width="12" height="11.500" rx="1" fill="#fff" stroke="#4a4f60"/><rect x="5" y="5.500" width="4" height="3.500" fill="#c5d3e3" stroke="#4a4f60"/>',
  '<path d="M2.500 3l9 9M11.500 3l-9 9" stroke="#4a4f60" stroke-width="4.600"/><path d="M3 3.500l8 8M11 3.500l-8 8" stroke="#fff" stroke-width="2.400"/>'
];

document.getElementById('desk').innerHTML = panels.map(p => `
  <section class="win">
    <div class="bar">
      <svg width="18" height="18"><use href="#chartIcon"/></svg>
      <h2>${p.title}</h2>
      <div class="btns">${glyphs.map(g => `<span class="btn"><svg width="14" height="15" viewBox="0 0 14 15">${g}</svg></span>`).join('')}</div>
    </div>
    <div class="view">${draw(p)}</div>
  </section>`).join('');

document.getElementById('net').innerHTML = Array.from({ length: 8 }, (_, i) => {
  const cut = 11 - i * 1.15;
  return rect(i * 4, 0, 3, cut, '#5f7300') + rect(i * 4, cut + 1, 3, 15 - cut, '#003a5c');
}).join('');
```
